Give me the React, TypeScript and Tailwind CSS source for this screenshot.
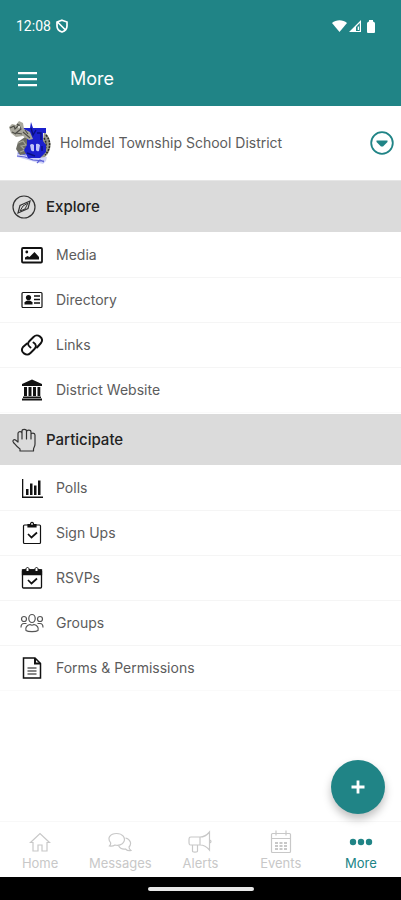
import type { ReactNode } from 'react'

type Item = { label: string; icon: ReactNode }

const explore: Item[] = [
  { label: 'Media', icon: <MediaIcon /> },
  { label: 'Directory', icon: <DirectoryIcon /> },
  { label: 'Links', icon: <LinksIcon /> },
  { label: 'District Website', icon: <BuildingIcon /> },
]

const participate: Item[] = [
  { label: 'Polls', icon: <PollsIcon /> },
  { label: 'Sign Ups', icon: <ClipboardIcon /> },
  { label: 'RSVPs', icon: <RsvpIcon /> },
  { label: 'Groups', icon: <GroupsIcon /> },
  { label: 'Forms & Permissions', icon: <FormIcon /> },
]

const tabs: Item[] = [
  { label: 'Home', icon: <HomeIcon /> },
  { label: 'Messages', icon: <MessagesIcon /> },
  { label: 'Alerts', icon: <AlertsIcon /> },
  { label: 'Events', icon: <EventsIcon /> },
  { label: 'More', icon: <MoreIcon /> },
]

export default function App() {
  return (
    <div className="min-h-screen flex flex-col bg-white font-['Inter','Liberation_Sans',sans-serif] text-[#5c5c5c]">
      <header className="bg-[#208486] text-white">
        <StatusBar />
        <div className="h-[54px] flex items-center gap-8 px-[18px]">
          <button type="button" aria-label="Menu">
            <svg className="w-5 h-4 block" viewBox="0 0 20 16" fill="currentColor">
              <path d="M0 1h19v2.200H0zM0 7h19v2.200H0zM0 13h19v2.200H0z" />
            </svg>
          </button>
          <h1 className="text-lg leading-6">More</h1>
        </div>
      </header>

      <main className="flex-1">
        <div className="h-[75px] flex items-center border-b border-[#e6e6e6] pl-2 pr-[7px]">
          <DistrictLogo />
          <p className="flex-1 pl-2 text-sm">Holmdel Township School District</p>
          <button type="button" aria-label="Switch district" className="text-[#208486]">
            <svg className="w-6 h-6 block" viewBox="0 0 24 24" fill="none" stroke="currentColor">
              <circle cx="12" cy="12" r="10.8" strokeWidth="1.8" />
              <path d="M6.500 9.500h11V11L13 15.500h-2L6.500 11z" fill="currentColor" stroke="none" />
            </svg>
          </button>
        </div>

        <Section title="Explore" icon={<CompassIcon />} items={explore} />
        <Section title="Participate" icon={<HandIcon />} items={participate} />
      </main>

      <footer className="relative">
        <button
          type="button"
          aria-label="Add"
          className="absolute right-4 bottom-[86px] w-[54px] h-[54px] rounded-full bg-[#208486] text-white flex items-center justify-center shadow-[0_5px_9px_rgba(0,0,0,0.25)]"
        >
          <svg className="w-3.5 h-3.5" viewBox="0 0 14 14" fill="none" stroke="currentColor" strokeWidth="2.800">
            <path d="M7 .5v13M.5 7h13" />
          </svg>
        </button>
        <nav className="h-14 grid grid-cols-5 border-t border-[#f8f8f8]">
          {tabs.map((tab) => (
            <a
              key={tab.label}
              href="#"
              className={
                tab.label === 'More'
                  ? 'flex flex-col items-center pt-2 text-[#208486]'
                  : 'flex flex-col items-center pt-2 text-[#c8c8c8]'
              }
            >
              {tab.icon}
              <span className="text-[13px] leading-[18px]">{tab.label}</span>
            </a>
          ))}
        </nav>
        <div className="h-[23px] bg-black flex items-center justify-center">
          <div className="w-[106px] h-1 rounded-full bg-[#e8e8e8]" />
        </div>
      </footer>
    </div>
  )
}

function Section({ title, icon, items }: { title: string; icon: ReactNode; items: Item[] }) {
  return (
    <section>
      <h2 className="h-[51px] flex items-center gap-2.5 pl-3 bg-[#dbdbdb] text-[15px] leading-5 font-medium text-[#222]">
        {icon}
        {title}
      </h2>
      <ul className="py-px">
        {items.map((item) => (
          <li key={item.label} className="border-b border-[#f5f5f5] last:border-[#fafafa]">
            <a href="#" className="h-11 flex items-center gap-3 pl-5 text-sm">
              <span className="text-[#111]">{item.icon}</span>
              {item.label}
            </a>
          </li>
        ))}
      </ul>
    </section>
  )
}

function StatusBar() {
  return (
    <div className="h-[52px] flex items-center pl-4 pr-[26px]">
      <span className="font-['Roboto',sans-serif] text-sm">12:08</span>
      <svg className="w-3.5 h-3.5 ml-1" viewBox="0 0 14 14" fill="none" stroke="currentColor" strokeWidth="1.700">
        <path d="M7 1.200 12 3v4c0 3-2 5-5 6-3-1-5-3-5-6V3zM3 3.500l7.500 7.500" />
      </svg>
      <div className="ml-auto flex items-center gap-0.5">
        <svg className="w-[15px] h-3" viewBox="0 0 15 12" fill="currentColor">
          <path d="M0 3C4-.8 11-.8 15 3L7.500 12z" />
        </svg>
        <svg className="w-3 h-3" viewBox="0 0 12 12" fill="currentColor">
          <path fillRule="evenodd" d="M12 0v12H0zM10.800 3 7 7v4h3.800z" />
          <path d="M8.700 6.500h1.300V10H8.700z" />
        </svg>
        <svg className="w-2 h-[13px] ml-1" viewBox="0 0 8 13" fill="currentColor">
          <path d="M2 1.500V0h4v1.500q2 .3 2 2V12q0 1-1 1H1q-1 0-1-1V3.500q0-1.700 2-2z" />
        </svg>
      </div>
    </div>
  )
}

function DistrictLogo() {
  return (
    <svg className="w-11 h-11" viewBox="0 0 44 44" role="img" aria-label="Holmdel">
      {/* base */}
      <path d="M9 31l30 5-1 4-3 3-8-2-18-5z" fill="#d3d5f8" />
      <path d="m9 35 8 1 8 3 11 1M10 32l8 2M29 42l3-3 4 2" stroke="#5c62d6" strokeWidth="1.200" fill="none" />
      {/* armour */}
      <path d="M36 11c8 5 9 18 1 25l-8 1 5-10z" fill="#98988c" />
      <path d="M38 14c5 6 5 14-1 20M36 17c3 4 3 11-2 17" stroke="#292926" fill="none" strokeWidth="1.500" strokeDasharray="2 1" />
      <path d="m17 16-7 5-2 7 4 6 10-2V18z" fill="#6d6d64" />
      <path d="m10 22 5-2 3 4-5 1 4 4-5 2" stroke="#a5a598" fill="none" strokeWidth="1.200" />
      {/* monogram */}
      <path d="M15 7h7l1-6 2 6h13v5h-3v8l3 4v7l-6 6H20l-4-8 3-5v-8l-4-4z" fill="#1b20cd" />
      <path d="m23 7 2 7 3-5M18 12l5 5M29 12h4v7M19 32l8 3M34 25v5" stroke="#0a1180" strokeWidth="1.400" fill="none" />
      <path d="M22 24q2-2 4 0v6q-2 1-3-1zM28 23q2-1 4 1l-1 6q-2 1-3-1z" fill="#bfc3f8" />
      {/* helmet and plume */}
      <path d="M1 6l3-3 4 1 3-4 4 2 1 6 6 3 3 7-4 1-6-4-7 1-5-4z" fill="#a8a79c" />
      <path d="m2 7 4-2 1 3 4-4 2 4-5 4 6 1M4 11l4 2M15 11l7 6M9 3l3 3M17 9l3 4" stroke="#4c4c46" fill="none" strokeWidth="1.100" />
      <circle cx="11" cy="6" r="1.200" fill="#deded6" />
    </svg>
  )
}

function CompassIcon() {
  return (
    <svg className="w-6 h-6" viewBox="0 0 24 24" fill="none" stroke="#333" strokeWidth="1.200">
      <circle cx="12" cy="12" r="11" />
      <path d="m18 6-2 7.500L6 18l2-7.500z" />
      <path d="m16 8-5 3-3 5 5-2z" strokeWidth="1" />
    </svg>
  )
}

function HandIcon() {
  return (
    <svg className="w-6 h-6" viewBox="0 0 24 24" fill="none" stroke="#333" strokeWidth="1.200" strokeLinejoin="round" strokeLinecap="round">
      <path d="M6 14V5.500C6 3 10 3 10 5.500V11M10 5.500V3c0-2.200 4.500-2.200 4.500 0v8M14.500 4c0-2.500 4.500-2.500 4.500 0v7M19 6.500c0-2 4-2 4 .5v9c0 3-1.500 3.500-1.500 5.500v1.500H8v-2c-2.500-1.500-4-3.500-6.500-6.500-1.500-2 .5-3.500 2-2.500L6 14" />
    </svg>
  )
}

function MediaIcon() {
  return (
    <svg className="w-6 h-6" viewBox="0 0 24 24" fill="currentColor">
      <rect x="2" y="5" width="20" height="14.500" rx="1" fill="none" stroke="currentColor" strokeWidth="1.800" />
      <circle cx="6.800" cy="9" r="1.400" />
      <path d="M5 16.500v-2l2.500-1.500 2 1 5-5 4.500 5v2.500z" />
    </svg>
  )
}

function DirectoryIcon() {
  return (
    <svg className="w-6 h-6" viewBox="0 0 24 24" fill="currentColor">
      <rect x="2" y="4.500" width="20" height="15" rx="1" fill="none" stroke="currentColor" strokeWidth="1.200" />
      <circle cx="8.500" cy="9.500" r="2.600" />
      <path d="M4.500 16.500v-2q1-1.500 3-2h2q2 .5 3 2v2z" />
      <path d="M14 8h6M14 11.500h6M14 15h6" stroke="currentColor" strokeWidth="1.300" />
    </svg>
  )
}

function LinksIcon() {
  return (
    <svg className="w-6 h-6" viewBox="0 0 24 24" fill="none" stroke="currentColor" strokeWidth="1.900" strokeLinecap="round" strokeLinejoin="round">
      <path d="M10.500 14.500c-3-2-3-4.500-1-6.500l4-4c4-4 11 1 7.500 6l-4 4.500" />
      <path d="M13.500 9.500c3 2 3 4.500 1 6.500l-4 4c-4 4-11-1-7.500-6L7 10.500" />
    </svg>
  )
}

function BuildingIcon() {
  return (
    <svg className="w-6 h-6" viewBox="0 0 24 24" fill="currentColor">
      <path d="M12 1.500 22 6v2H2V6zM4 9h3v9H4zM8.500 9h3v9h-3zM13 9h3v9h-3zM17.500 9h2.800v9h-2.800zM3 18.500h18V20H3zM2 20.500h20v2H2z" />
    </svg>
  )
}

function PollsIcon() {
  return (
    <svg className="w-6 h-6" viewBox="0 0 24 24" fill="currentColor">
      <path d="M2 3h1.300v17.500H23V22H2zM6 13h2.500v6H6zM10 7.500h2.500V19H10zM14 9.500h2.500V19H14zM18 4.500h2.500V19H18z" />
    </svg>
  )
}

function ClipboardIcon() {
  return (
    <svg className="w-6 h-6" viewBox="0 0 24 24" fill="none" stroke="currentColor" strokeWidth="1.200">
      <rect x="3.500" y="4" width="17" height="18.500" rx="1" />
      <path d="M8 6V3.500h2.500c0-3 3-3 3 0H16V6z" fill="currentColor" />
      <circle cx="12" cy="2.900" r=".9" fill="#fff" stroke="none" />
      <path d="m8 13 3.500 3.500 5.500-5" strokeWidth="1.700" />
    </svg>
  )
}

function RsvpIcon() {
  return (
    <svg className="w-6 h-6" viewBox="0 0 24 24" fill="none" stroke="currentColor" strokeWidth="1.300">
      <rect x="2.500" y="4" width="19" height="18" rx="1" />
      <path d="M2.500 4h19v4.500h-19z" fill="currentColor" />
      <path d="M6 5.500V3c0-2 3-2 3 0v2.500zM15 5.500V3c0-2 3-2 3 0v2.500z" fill="#fff" strokeWidth="1" />
      <path d="m8 14 3.500 3.500 5.500-5" strokeWidth="1.700" />
    </svg>
  )
}

function GroupsIcon() {
  return (
    <svg className="w-6 h-6" viewBox="0 0 24 24" fill="none" stroke="#555" strokeWidth="1.200">
      <ellipse cx="12" cy="7.500" rx="3.200" ry="4" />
      <path d="M6 19.500c-1-3 1-5.500 4-6 1.500 1 2.500 1 4 0 3 .5 5 3 4 6-2 1.500-10 1.500-12 0z" />
      <circle cx="4" cy="8" r="2.500" />
      <circle cx="20" cy="8" r="2.500" />
      <path d="M1 16.500c0-2.500 1-4 3-4h2.500M23 16.500c0-2.500-1-4-3-4h-2.500" />
    </svg>
  )
}

function FormIcon() {
  return (
    <svg className="w-6 h-6" viewBox="0 0 24 24" fill="none" stroke="currentColor" strokeWidth="1.500">
      <path d="M3.500 2H15l5.500 5.500V22h-17z" />
      <path d="M15 2v5.500h5.500" fill="none" strokeWidth="2" />
      <path d="M7.500 12h9M7.500 15h9M7.500 18h9" strokeWidth="1.200" />
    </svg>
  )
}

function HomeIcon() {
  return (
    <svg className="w-6 h-6" viewBox="0 0 24 24" fill="none" stroke="currentColor" strokeWidth="1.200">
      <path d="m2.500 12.500 9.500-9 9.500 9H19V21h-5v-6h-4v6H5v-8.500z" />
    </svg>
  )
}

function MessagesIcon() {
  return (
    <svg className="w-6 h-6" viewBox="0 0 24 24" fill="none" stroke="currentColor" strokeWidth="1.200">
      <path d="M1.500 16c1-1 1.500-2 1-3.500C-1 8 2 3.500 8.500 3.500S17.500 8 16 11.500s-6 4.500-9 3.500c-1.500 1-3.500 1.500-5.500 1z" />
      <path d="M17.500 8c5 1 6.500 6 3.500 9 0 1.500.5 2.500 2 3.500-2 .5-4 0-5.500-1.500-3 .5-5.500-.5-7-3.500" />
    </svg>
  )
}

function AlertsIcon() {
  return (
    <svg className="w-6 h-6" viewBox="0 0 24 24" fill="none" stroke="currentColor" strokeWidth="1.200">
      <path d="M12 7H3c-2 0-2 1-2 4s0 4 2 4h9zM12 7c4 0 7-2 9.500-5v18c-2.500-3-5.500-5-9.500-5M21.500 10c2 0 2 3 0 3M4.500 15v6c0 1.500 5 1.500 5 0v-6" />
    </svg>
  )
}

function EventsIcon() {
  return (
    <svg className="w-6 h-6" viewBox="0 0 24 24" fill="none" stroke="currentColor" strokeWidth="1.200">
      <rect x="2.500" y="3.500" width="19" height="19" rx="1" />
      <path d="M2.500 8.500h19M7 .5v5M17 .5v5" />
      <path d="M6 13h3M10.500 13h3M15 13h3M6 16h3M10.500 16h3M15 16h3M6 19h3M10.500 19h3M15 19h3" strokeWidth="1.800" />
    </svg>
  )
}

function MoreIcon() {
  return (
    <svg className="w-6 h-6" viewBox="0 0 24 24" fill="currentColor">
      <circle cx="4" cy="12" r="3.200" />
      <circle cx="12" cy="12" r="3.200" />
      <circle cx="20" cy="12" r="3.200" />
    </svg>
  )
}
